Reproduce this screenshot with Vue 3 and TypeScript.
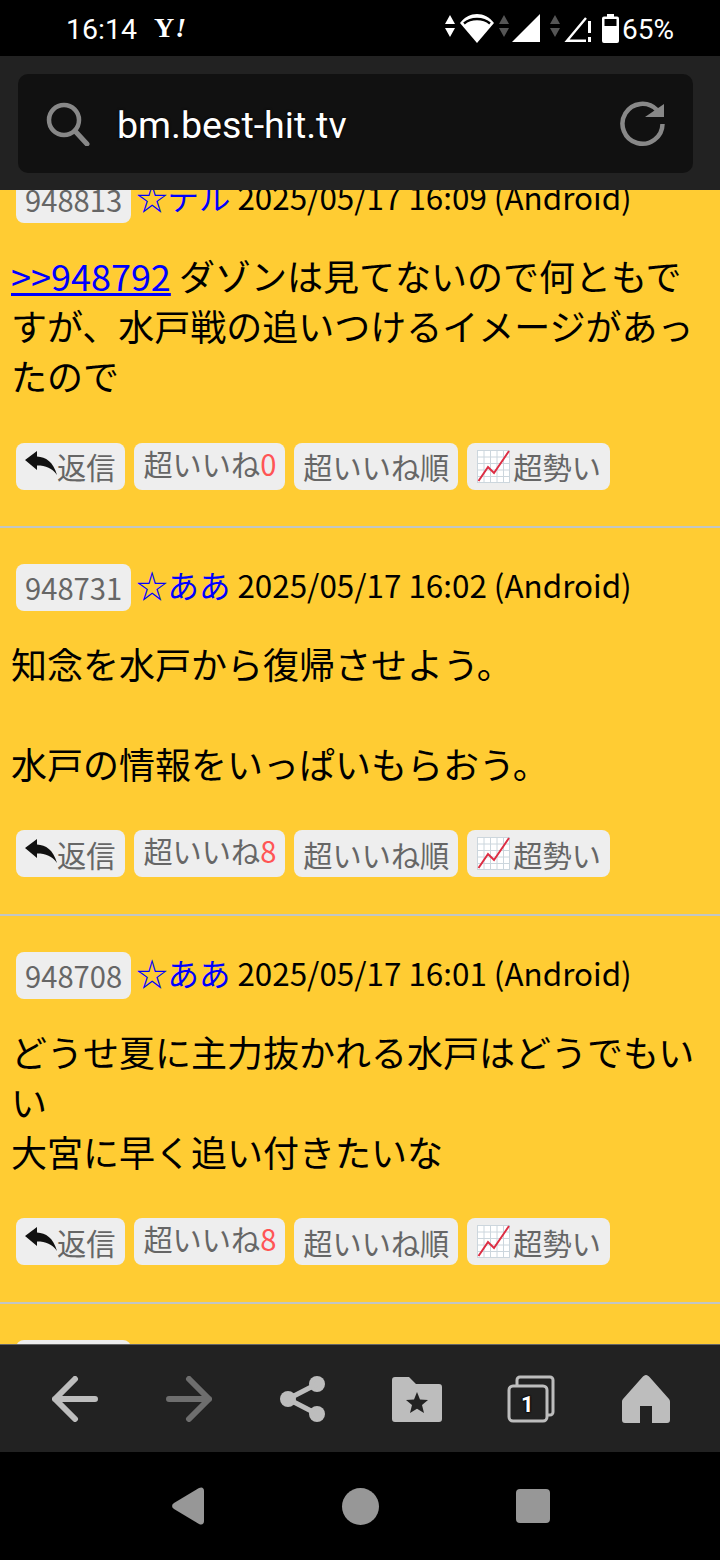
<template>
  <div class="phone" lang="ja">
    <header class="status">
      <span class="clock">16:14</span>
      <span class="yahoo">Y<i>!</i></span>
      <div class="status-icons">
        <svg class="updown" width="10" height="22" viewBox="0 0 10 22"><path d="M5 0l5 9H0zM0 13h10l-5 9z" fill="#fff" /></svg>
        <svg class="wifi" width="34" height="29" viewBox="0 0 34 29">
          <path d="M0 9C9-3 25-3 34 9L17 29z" fill="#fff" />
          <path d="M4 9.500C11 3.500 23 3.500 30 9.500" fill="none" stroke="#000" stroke-width="2.400" />
        </svg>
        <svg class="wifi updown" width="10" height="22" viewBox="0 0 10 22"><path d="M5 0l5 9H0zM0 13h10l-5 9z" fill="#555" /></svg>
        <svg class="sig" width="28" height="28" viewBox="0 0 28 28"><path d="M28 0v28H0z" fill="#fff" /></svg>
        <svg class="far updown" width="10" height="22" viewBox="0 0 10 22"><path d="M5 0l5 9H0zM0 13h10l-5 9z" fill="#555" /></svg>
        <svg class="sig2" width="28" height="28" viewBox="0 0 28 28">
          <path d="M22 4L3 26.800H22" fill="none" stroke="#fff" stroke-width="2.400" />
          <path d="M24 7h3v12h-3zM24 23h3v5h-3z" fill="#fff" />
        </svg>
        <svg class="far" width="17" height="29" viewBox="0 0 17 29">
          <path d="M5 0h7v2.500h3a2 2 0 0 1 2 2V27a2 2 0 0 1-2 2H2a2 2 0 0 1-2-2V4.500a2 2 0 0 1 2-2h3z" fill="#fff" />
          <path d="M2.500 5h12v7h-12z" fill="#000" />
        </svg>
        <span class="percent">65%</span>
      </div>
    </header>

    <div class="toolbar">
      <div class="urlbar">
        <svg width="44" height="44" viewBox="0 0 44 44" fill="none" stroke="#888">
          <circle cx="18" cy="18" r="15" stroke-width="4.500" />
          <path d="M29 29l12 13" stroke-width="5" stroke-linecap="round" />
        </svg>
        <span class="url">bm.best-hit.tv</span>
        <svg class="reload" width="46" height="46" viewBox="0 0 46 46" fill="none">
          <path d="M37 9A20 20 0 1 0 42.500 23" stroke="#888" stroke-width="4.500" />
          <path d="M44 3v13H25z" fill="#888" />
        </svg>
      </div>
    </div>

    <main class="content">
      <div class="feed">
        <article v-for="post in posts" :key="post.id" class="post">
          <div class="post-head">
            <span class="res-no">{{ post.id }}</span>
            <span class="name">☆{{ post.name }}</span>
            <span class="date">{{ post.date }} (Android)</span>
          </div>
          <p class="body">
            <a v-if="post.anchor" class="anchor">&gt;&gt;{{ post.anchor }}</a>
            {{ post.anchor ? ' ' : '' }}<template v-for="(line, i) in post.lines" :key="i"><br v-if="i > 0" />{{ line }}</template>
          </p>
          <div class="actions">
            <span class="btn btn-reply">
              <svg width="32" height="24" viewBox="0 0 32 24"><path d="M0 9L12 0v5.500c9 .5 16 5 20 18.500-5-7-11-9.500-20-9.500V19z" fill="#111" /></svg>
              返信
            </span>
            <span class="btn btn-like">超いいね<em>{{ post.likes }}</em></span>
            <span class="btn">超いいね順</span>
            <span class="btn btn-trend">
              <svg width="33" height="33" viewBox="0 0 33 33">
                <rect x="0.500" y="0.500" width="32" height="32" fill="#fff" stroke="#ccd6dd" />
                <path d="M7 1v31M13.500 1v31M20 1v31M26.500 1v31M1 7h31M1 13.500h31M1 20h31M1 26.500h31" stroke="#ccd6dd" stroke-width="1" />
                <path d="M1.500 31L11 17l6 6L32 1" fill="none" stroke="#dd2e44" stroke-width="2" />
              </svg>
              超勢い
            </span>
          </div>
        </article>
      </div>
    </main>

    <nav class="bottom-bar">
      <svg width="46" height="46" viewBox="0 0 46 46" fill="none" stroke="#bdbdbd" stroke-width="6" stroke-linecap="round" stroke-linejoin="round"><path d="M23 3L3 23l20 20M3 23h40" /></svg>
      <svg width="46" height="46" viewBox="0 0 46 46" fill="none" stroke="#6e6e6e" stroke-width="6" stroke-linecap="round" stroke-linejoin="round"><path d="M23 3l20 20-20 20M43 23H3" /></svg>
      <svg width="46" height="46" viewBox="0 0 46 46" fill="#bdbdbd">
        <circle cx="37" cy="8" r="8" /><circle cx="37" cy="38" r="8" /><circle cx="8" cy="23" r="8" />
        <path d="M8 23L37 8M8 23l29 15" stroke="#bdbdbd" stroke-width="5" />
      </svg>
      <svg width="50" height="46" viewBox="0 0 50 46">
        <path d="M0 4a3 3 0 0 1 3-3h14l7 7h23a3 3 0 0 1 3 3v32a3 3 0 0 1-3 3H3a3 3 0 0 1-3-3z" fill="#bdbdbd" />
        <path d="M25 16l3 7.500 8 .5-6 5 2 8-7-4.300-7 4.300 2-8-6-5 8-.5z" fill="#222" />
      </svg>
      <div class="tabs-ico">
        <svg width="48" height="48" viewBox="0 0 48 48" fill="none" stroke="#bdbdbd" stroke-width="3">
          <path d="M10 10V5a3 3 0 0 1 3-3h30a3 3 0 0 1 3 3v32a3 3 0 0 1-3 3h-3" />
          <rect x="2" y="11" width="38" height="35" rx="4" fill="#222" />
        </svg>
        <span class="tabs-count">1</span>
      </div>
      <svg class="home" width="48" height="48" viewBox="0 0 48 48"><path d="M24 0c1.500 0 2.500 1 3.500 2L47 24c.7 1 1 1.500 1 3v18c0 2-1 3-3 3H30V31H18v17H3c-2 0-3-1-3-3V27c0-1.500.3-2 1-3L20.500 2c1-1 2-2 3.500-2z" fill="#bdbdbd" /></svg>
    </nav>

    <footer class="nav-bar">
      <svg class="nudge" width="34" height="38" viewBox="0 0 34 38"><path d="M2 16L27 1c3-1.500 5 0 5 3v30c0 3-2 4.500-5 3L2 22c-2.500-1.500-2.500-4.500 0-6z" fill="#979797" /></svg>
      <span class="nav-dot"></span>
      <span class="nav-square nudge"></span>
    </footer>
  </div>
</template>

<script setup lang="ts">
interface Post {
  id: number;
  name: string;
  date: string;
  anchor?: number;
  lines: string[];
  likes: number;
}

const posts: Post[] = [
  {
    id: 948813,
    name: 'テル',
    date: '2025/05/17 16:09',
    anchor: 948792,
    lines: ['ダゾンは見てないので何ともですが、水戸戦の追いつけるイメージがあったので'],
    likes: 0,
  },
  {
    id: 948731,
    name: 'ああ',
    date: '2025/05/17 16:02',
    lines: ['知念を水戸から復帰させよう。', '', '水戸の情報をいっぱいもらおう。'],
    likes: 8,
  },
  {
    id: 948708,
    name: 'ああ',
    date: '2025/05/17 16:01',
    lines: ['どうせ夏に主力抜かれる水戸はどうでもいい', '大宮に早く追い付きたいな'],
    likes: 8,
  },
  {
    id: 948690,
    name: 'ああ',
    date: '2025/05/17 15:58',
    lines: ['水戸の情報をいっぱいもらおう。'],
    likes: 0,
  },
];
</script>

<style>
html,
body {
  background: #000;
}
</style>

<style scoped>
.phone {
  width: 720px;
  height: 1560px;
  display: flex;
  flex-direction: column;
  overflow: hidden;
  font-family: "Noto Sans CJK JP", "Noto Sans", sans-serif;
  background: #000;
}

.status {
  height: 56px;
  flex: none;
  display: flex;
  align-items: center;
  padding: 0 46px 0 66px;
  color: #fff;
  font-family: Roboto, sans-serif;
}

.clock {
  margin-top: 2px;
  font-size: 28.500px;
}

.yahoo {
  margin-left: 17px;
  font: bold 28px "Liberation Serif", serif;
}

.yahoo i {
  margin-left: 1px;
}

.status-icons {
  margin-left: auto;
  display: flex;
  align-items: center;
}

.updown {
  margin-bottom: 4px;
}

.wifi {
  margin-left: 5px;
}

.sig {
  margin-left: 3px;
}

.far {
  margin-left: 10px;
}

.sig2 {
  margin-left: 4px;
}

.percent {
  margin: 2px 0 0 3px;
  font-size: 28px;
}

.toolbar {
  height: 134px;
  flex: none;
  box-sizing: border-box;
  padding: 18px 27px 17px 18px;
  background: #222;
}

.urlbar {
  height: 99px;
  display: flex;
  align-items: center;
  padding: 0 27px 0 28px;
  border-radius: 10px;
  background: #111;
}

.url {
  margin: 2px 0 0 27px;
  font: 37.600px Roboto, sans-serif;
  color: #fff;
  text-shadow: 0 0 3px #000;
}

.reload {
  margin-left: auto;
}

.content {
  flex: 1;
  min-height: 0;
  overflow: hidden;
  background: #fc3;
}

.feed {
  margin-top: -50.200px;
}

.post {
  padding: 36.500px 12px 36.300px 11px;
  border-bottom: 2px solid #c2c6c4;
  color: #000;
}

.post-head {
  height: 47px;
  display: flex;
  align-items: center;
  padding-left: 5px;
  font-size: 31.400px;
  white-space: nowrap;
}

.res-no {
  height: 47px;
  box-sizing: border-box;
  display: flex;
  align-items: center;
  padding: 0 9px 2px;
  border-radius: 8px;
  background: #eee;
  color: #666;
  font-size: 29.200px;
}

.name {
  margin: 0 0 6px 5px;
  color: #00f;
}

.date {
  margin: 0 0 6px 7px;
}

.body {
  margin: 27px 0 42.200px;
  font-size: 36px;
  line-height: 50px;
}

.anchor {
  color: #00f;
  text-decoration: underline;
}

.actions {
  display: flex;
  gap: 9px;
  padding-left: 5px;
}

.btn {
  height: 47px;
  box-sizing: border-box;
  display: flex;
  align-items: center;
  padding: 0 9px;
  border-radius: 8px;
  background: #eee;
  color: #666;
  font-size: 29.200px;
  white-space: nowrap;
}

.btn-reply {
  padding-right: 10px;
}

.btn-reply svg {
  margin-bottom: 6px;
}

.btn-like {
  padding-bottom: 7px;
}

.btn-like em {
  font-style: normal;
  color: #f55;
}

.btn-trend svg {
  margin: 0 3px 0 1px;
}

.bottom-bar {
  height: 108px;
  flex: none;
  display: grid;
  grid-template-columns: repeat(6, 114px);
  justify-items: center;
  align-items: center;
  padding: 0 18px;
  border-top: 1px solid #666;
  box-sizing: border-box;
  background: #222;
}

.home {
  margin-left: 2px;
}

.tabs-ico {
  position: relative;
  width: 48px;
  height: 48px;
}

.tabs-count {
  position: absolute;
  left: 14px;
  top: 18px;
  font: bold 22px/24px Roboto, sans-serif;
  color: #fff;
  text-shadow: 0 0 2px #000, 0 0 2px #000, 0 0 2px #000;
}

.nav-bar {
  height: 108px;
  flex: none;
  display: grid;
  grid-template-columns: repeat(3, 172px);
  justify-content: center;
  justify-items: center;
  align-items: center;
}

.nudge {
  margin-left: 2px;
}

.nav-dot {
  width: 37px;
  height: 37px;
  border-radius: 50%;
  background: #979797;
}

.nav-square {
  width: 34px;
  height: 34px;
  border-radius: 4px;
  background: #979797;
}
</style>
